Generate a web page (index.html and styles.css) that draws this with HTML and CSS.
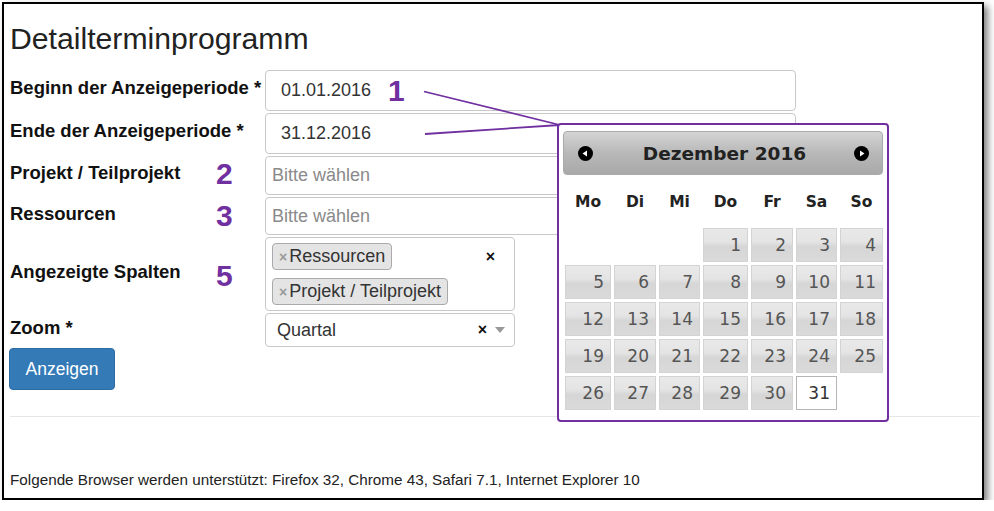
FILE: index.html
```html
<!DOCTYPE html>
<html lang="de">
<head>
<meta charset="utf-8">
<title>Detailterminprogramm</title>
<link rel="stylesheet" href="styles.css">
</head>
<body>
<div class="frame">
  <h1 class="title">Detailterminprogramm</h1>
  <div class="form">
    <div class="row row-begin">
      <div class="label">Beginn der Anzeigeperiode *</div>
      <div class="input input-wide input-date">01.01.2016</div>
    </div>
    <div class="row row-end">
      <div class="label">Ende der Anzeigeperiode *</div>
      <div class="input input-wide input-date">31.12.2016</div>
    </div>
    <div class="row row-proj">
      <div class="label">Projekt / Teilprojekt</div>
      <div class="input input-wide placeholder">Bitte wählen</div>
    </div>
    <div class="row row-res">
      <div class="label">Ressourcen</div>
      <div class="input input-wide placeholder">Bitte wählen</div>
    </div>
    <div class="row row-cols">
      <div class="label">Angezeigte Spalten</div>
      <div class="input input-narrow multi">
        <div class="tags">
          <span class="tag"><span class="tag-x">×</span>Ressourcen</span>
          <span class="tag"><span class="tag-x">×</span>Projekt / Teilprojekt</span>
        </div>
        <span class="clear">×</span>
      </div>
    </div>
    <div class="row row-zoom">
      <div class="label">Zoom *</div>
      <div class="input input-narrow select">
        <span class="sel-value">Quartal</span>
        <span class="sel-clear">×</span>
        <span class="sel-arrow"></span>
      </div>
    </div>
  </div>
  <button class="btn">Anzeigen</button>
  <hr class="rule">
  <p class="footer">Folgende Browser werden unterstützt: Firefox 32, Chrome 43, Safari 7.1, Internet Explorer 10</p>

  <svg class="lines" width="990" height="500" viewBox="0 0 990 500">
    <line x1="420" y1="87.5" x2="556" y2="121" stroke="#7030a0" stroke-width="1.8"/>
    <line x1="421" y1="130" x2="556" y2="121" stroke="#7030a0" stroke-width="1.8"/>
  </svg>
  <span class="num num-1">1</span>
  <span class="num num-2">2</span>
  <span class="num num-3">3</span>
  <span class="num num-5">5</span>

  <div class="cal">
    <div class="cal-head">
      <span class="cal-nav"><svg width="15" height="15" viewBox="0 0 15 15"><circle cx="7.5" cy="7.5" r="7.5" fill="#000"/><polygon points="4.5,7.5 9,4.5 9,10.5" fill="#fff"/></svg></span>
      <span class="cal-title">Dezember 2016</span>
      <span class="cal-nav"><svg width="15" height="15" viewBox="0 0 15 15"><circle cx="7.5" cy="7.5" r="7.5" fill="#000"/><polygon points="10.5,7.5 6,4.5 6,10.5" fill="#fff"/></svg></span>
    </div>
    <div class="cal-days">
      <span>Mo</span><span>Di</span><span>Mi</span><span>Do</span><span>Fr</span><span>Sa</span><span>So</span>
    </div>
    <div class="cal-grid">
      <span class="empty"></span><span class="empty"></span><span class="empty"></span>
      <span class="day">1</span><span class="day">2</span><span class="day">3</span><span class="day">4</span>
      <span class="day">5</span><span class="day">6</span><span class="day">7</span><span class="day">8</span><span class="day">9</span><span class="day">10</span><span class="day">11</span>
      <span class="day">12</span><span class="day">13</span><span class="day">14</span><span class="day">15</span><span class="day">16</span><span class="day">17</span><span class="day">18</span>
      <span class="day">19</span><span class="day">20</span><span class="day">21</span><span class="day">22</span><span class="day">23</span><span class="day">24</span><span class="day">25</span>
      <span class="day">26</span><span class="day">27</span><span class="day">28</span><span class="day">29</span><span class="day">30</span><span class="day today">31</span>
    </div>
  </div>
</div>
</body>
</html>
```

FILE: styles.css
```css
* { box-sizing: border-box; }
html, body { margin: 0; padding: 0; background: #fff; }
body { font-family: "Liberation Sans", Arial, sans-serif; color: #333; }

.frame {
  position: relative;
  margin: 2px 0 0 2px;
  width: 982px;
  height: 498px;
  border: 2px solid #000;
  background: #fff;
  box-shadow: 4px 4px 7px rgba(0, 0, 0, 0.5);
  padding: 17px 0 0 6px;
  overflow: visible;
}

.title {
  margin: 0 0 13px 0;
  font-size: 30.2px;
  line-height: 36px;
  font-weight: normal;
  color: #222;
}

.form { display: flex; flex-direction: column; gap: 2px; }
.row { display: flex; align-items: center; }
.row-begin { height: 41px; }
.row-end { height: 41px; }
.row-proj { height: 39px; }
.row-res { height: 38px; }
.row-cols { height: 74px; }
.row-zoom { height: 34px; }

.label {
  width: 255px;
  flex: none;
  font-size: 18.5px;
  font-weight: bold;
  line-height: 22px;
  color: #111;
  margin-bottom: 5px;
}

.input {
  height: 100%;
  border: 1px solid #c8c8c8;
  border-radius: 4px;
  background: #fff;
  font-size: 18px;
  color: #333;
  display: flex;
  align-items: center;
}
.input-wide { width: 531px; }
.input-narrow { width: 250px; }
.input-date { padding-left: 15px; color: #333; }
.placeholder { padding-left: 6px; color: #8a8a8a; }

.multi { align-items: flex-start; padding: 5px 0 0 6px; }
.tags { flex: 1; display: flex; flex-direction: column; align-items: flex-start; gap: 8px; }
.tag {
  display: inline-flex;
  align-items: center;
  height: 27px;
  padding: 0 6px 0 6px;
  background: #e4e4e4;
  border: 1px solid #aaa;
  border-radius: 4px;
  color: #333;
  font-size: 18px;
}
.tag-x { color: #999; font-size: 14px; font-weight: bold; margin-right: 2px; }
.clear { font-size: 16px; font-weight: bold; color: #111; line-height: 27px; margin-right: 19px; }

.select { padding-left: 11px; }
.sel-value { flex: 1; color: #333; }
.sel-clear { font-size: 16px; font-weight: bold; color: #111; margin-right: 8px; }
.sel-arrow {
  width: 0; height: 0;
  border-left: 5px solid transparent;
  border-right: 5px solid transparent;
  border-top: 6px solid #999;
  margin-right: 9px;
}

.btn {
  display: block;
  margin: 1px 0 0 -1px;
  width: 106px;
  height: 42px;
  background: #337ab7;
  border: 1px solid #2e6da4;
  border-radius: 4px;
  color: #fff;
  font-family: "Liberation Sans", Arial, sans-serif;
  font-size: 17.5px;
  padding: 0;
}

.rule { margin: 26px 0 0 0; border: 0; border-top: 1px solid #e6e6e6; width: 970px; }

.footer { margin: 54px 0 0 0; font-size: 15.25px; line-height: 18px; color: #222; }

.lines { position: absolute; left: 0; top: 0; pointer-events: none; }

.num {
  position: absolute;
  font-size: 30px;
  line-height: 30px;
  font-weight: bold;
  color: #7030a0;
}
.num-1 { left: 384px; top: 72px; }
.num-2 { left: 212px; top: 155px; }
.num-3 { left: 212px; top: 197px; }
.num-5 { left: 212px; top: 257px; }

.cal {
  position: absolute;
  left: 553px;
  top: 119px;
  width: 332px;
  border: 2px solid #7030a0;
  border-radius: 4px;
  background: #fff;
  padding: 6px 4px 10px 4px;
  font-family: "DejaVu Sans", Verdana, sans-serif;
}
.cal-head {
  height: 44px;
  border: 1px solid #aaa;
  border-radius: 4px;
  background: linear-gradient(#d4d4d4, #b8b8b8 50%, #a9a9a9);
  display: flex;
  align-items: center;
  padding: 0 13px 0 14px;
}
.cal-nav { display: flex; width: 15px; height: 15px; }
.cal-title {
  flex: 1;
  text-align: center;
  font-weight: bold;
  font-size: 18.5px;
  color: #222;
  padding-left: 2px;
}
.cal-days {
  height: 53px;
  display: grid;
  grid-template-columns: 46px 42px 41px 45px 42px 41px 43px;
  column-gap: 3px;
  padding-left: 2px;
  align-items: center;
  text-align: center;
  font-weight: bold;
  font-size: 15.5px;
  color: #222;
}
.cal-grid {
  display: grid;
  grid-template-columns: 46px 42px 41px 45px 42px 41px 43px;
  grid-auto-rows: 34px;
  gap: 3px;
  padding-left: 2px;
}
.day {
  border: 1px solid #d3d3d3;
  background: linear-gradient(#e9e9e9 0%, #e4e4e4 40%, #d6d6d6 55%, #dadada 100%);
  color: #555;
  font-size: 17px;
  text-align: right;
  padding-right: 6px;
  line-height: 32px;
}
.day.today { background: #fff; border-color: #b5b5b5; color: #333; }
```
